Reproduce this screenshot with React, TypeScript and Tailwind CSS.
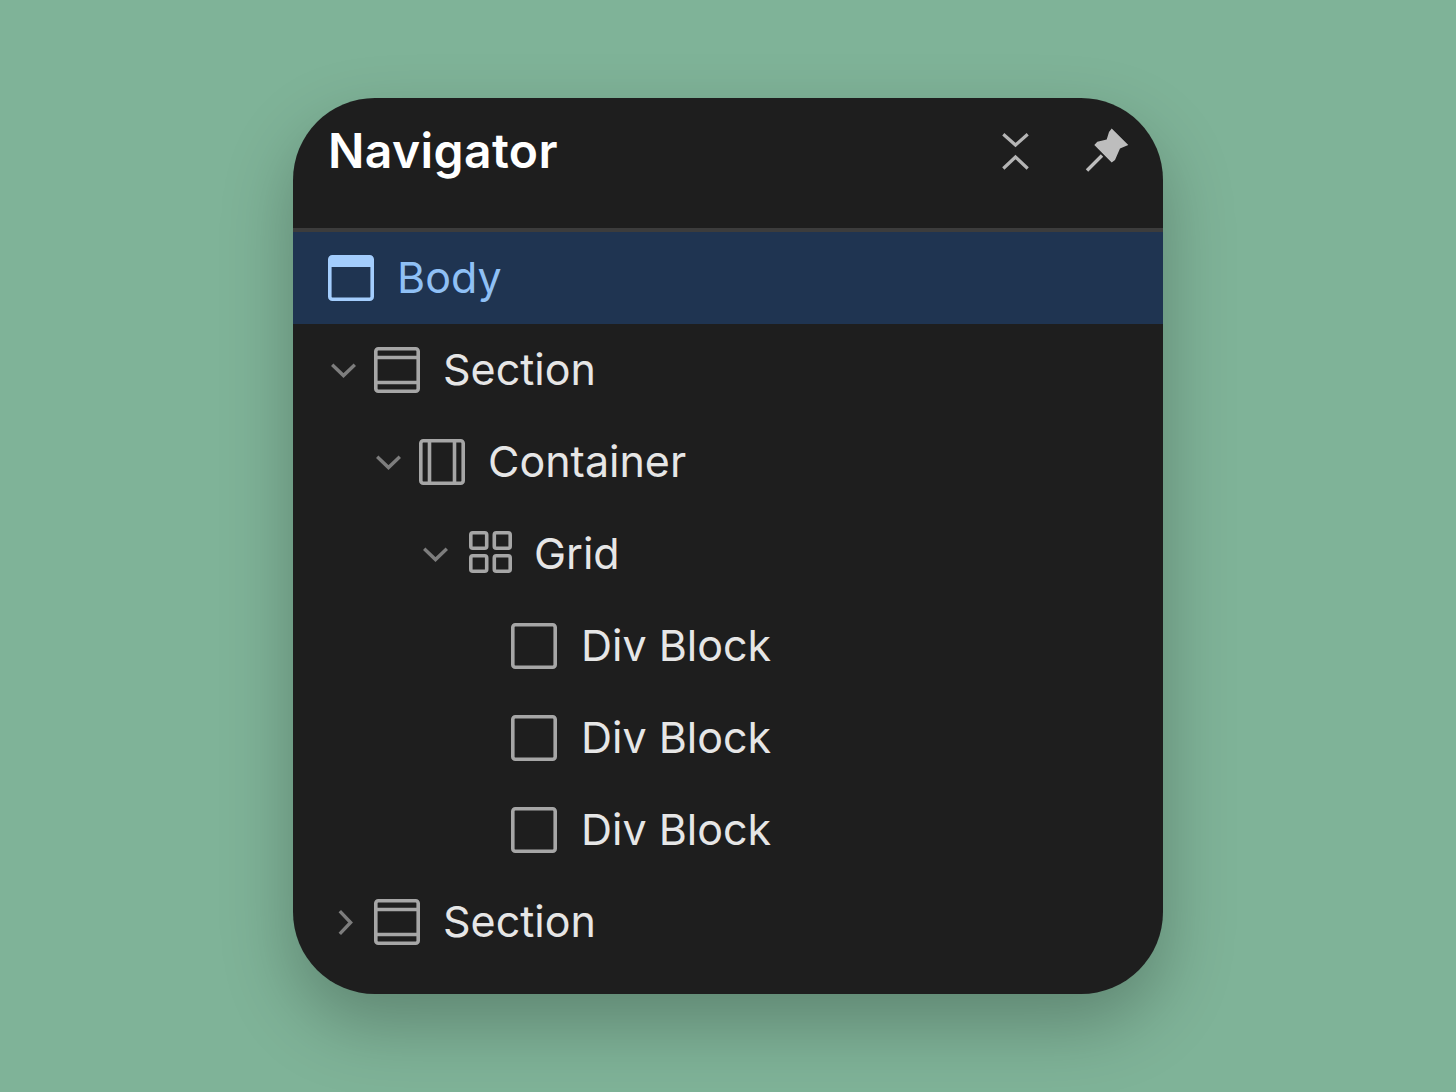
import React from "react";

const stroke = "#a6a6a6";

function Frame({ children, color = stroke }: { children?: React.ReactNode; color?: string }) {
  return (
    <svg width="46" height="46" viewBox="0 0 46 46" fill="none" stroke={color} strokeWidth="3.6" className="shrink-0">
      <rect x="1.8" y="1.8" width="42.4" height="42.4" rx="2.5" />
      {children}
    </svg>
  );
}

const SectionIcon = () => (
  <Frame>
    <path d="M2 10.5H44M2 35.5H44" />
  </Frame>
);
const ContainerIcon = () => (
  <Frame>
    <path d="M10.5 2V44M35.5 2V44" />
  </Frame>
);
const BlockIcon = () => <Frame />;
const GridIcon = () => (
  <svg width="46" height="46" viewBox="0 0 46 46" fill="none" stroke={stroke} strokeWidth="3.6" className="shrink-0">
    <rect x="4.8" y="1.8" width="15.9" height="15.4" rx="2" />
    <rect x="28.3" y="1.8" width="15.9" height="15.4" rx="2" />
    <rect x="4.8" y="24.8" width="15.9" height="15.4" rx="2" />
    <rect x="28.3" y="24.8" width="15.9" height="15.4" rx="2" />
  </svg>
);
const BodyIcon = () => (
  <svg width="46" height="46" viewBox="0 0 46 46" fill="none" className="shrink-0">
    <rect x="1.8" y="1.8" width="42.4" height="42.4" rx="2.5" stroke="#a3cdfd" strokeWidth="3.6" />
    <path d="M2 2.5a1 1 0 0 1 1-1H43a1 1 0 0 1 1 1V12H2Z" fill="#a3cdfd" />
  </svg>
);

function Chevron({ open }: { open: boolean }) {
  return open ? (
    <span className="flex h-[46px] w-[47px] shrink-0 items-center pl-[4px]">
      <svg width="25" height="15" viewBox="0 0 25 15" fill="none" stroke="#7d7d7d" strokeWidth="3.4">
        <path d="M1.2 1.8L12.5 12.6L23.8 1.8" />
      </svg>
    </span>
  ) : (
    <span className="flex h-[46px] w-[47px] shrink-0 items-center pl-[11px]">
      <svg width="15" height="25" viewBox="0 0 15 25" fill="none" stroke="#7d7d7d" strokeWidth="3.4">
        <path d="M1.8 1.2L12.6 12.5L1.8 23.8" />
      </svg>
    </span>
  );
}

type RowProps = {
  indent: string;
  gap: string;
  chevron?: "open" | "closed";
  icon: React.ReactNode;
  label: string;
};

function Row({ indent, gap, chevron, icon, label }: RowProps) {
  return (
    <div className={`flex h-[92px] items-center ${indent}`}>
      {chevron ? <Chevron open={chevron === "open"} /> : null}
      {icon}
      <span className={`${gap} pb-[2px] text-[43px] leading-none text-[#e6e6e6]`}>{label}</span>
    </div>
  );
}

export default function App() {
  return (
    <div
      className="flex h-[1092px] w-full justify-center overflow-hidden bg-[#7fb398] pt-[98px]"
      style={{ fontFamily: "Inter, 'Liberation Sans', sans-serif" }}
    >
      <div className="h-[896px] w-[870px] overflow-hidden rounded-[82px] bg-[#1e1e1e] shadow-[0_30px_70px_rgba(0,0,0,0.25)]">
        <header className="flex h-[130px] items-start justify-between pl-[35px] pr-[34px]">
          <h1 className="mt-[26px] text-[48px] font-semibold leading-[54px] tracking-[0.4px] text-white">Navigator</h1>
          <div className="mt-[28px] flex items-start gap-[56px]">
            <svg width="27" height="39" viewBox="0 0 27 39" fill="none" stroke="#b5b5b5" strokeWidth="3.2" className="mt-[6px]">
              <path d="M1.3 2.3L13.5 13L25.7 2.3M1.3 36.5L13.5 25L25.7 36.5" />
            </svg>
            <svg width="44" height="44" viewBox="0 0 44 44" className="mt-[2px]">
              <path d="M2 42.5L17 27.5" stroke="#bdbdbd" strokeWidth="3.4" fill="none" />
              <path
                d="M26.7 0.5L43.3 17L35 20.5L30 32L26.7 34.5L9.3 17L12.3 13.8L21.7 11.5L24 4Z"
                fill="#bdbdbd"
              />
            </svg>
          </div>
        </header>
        <div className="border-t-4 border-[#3c3c3c]">
          <div className="flex h-[92px] items-center bg-[#1f3451] pl-[35px]">
            <BodyIcon />
            <span className="ml-[23px] pb-[2px] text-[43px] leading-none text-[#8fc0f5]">Body</span>
          </div>
          <Row indent="pl-[34px]" gap="ml-[23px]" chevron="open" icon={<SectionIcon />} label="Section" />
          <Row indent="pl-[79px]" gap="ml-[23px]" chevron="open" icon={<ContainerIcon />} label="Container" />
          <Row indent="pl-[126px]" gap="ml-[22px]" chevron="open" icon={<GridIcon />} label="Grid" />
          <Row indent="pl-[218px]" gap="ml-[24px]" icon={<BlockIcon />} label="Div Block" />
          <Row indent="pl-[218px]" gap="ml-[24px]" icon={<BlockIcon />} label="Div Block" />
          <Row indent="pl-[218px]" gap="ml-[24px]" icon={<BlockIcon />} label="Div Block" />
          <Row indent="pl-[34px]" gap="ml-[23px]" chevron="closed" icon={<SectionIcon />} label="Section" />
        </div>
      </div>
    </div>
  );
}
